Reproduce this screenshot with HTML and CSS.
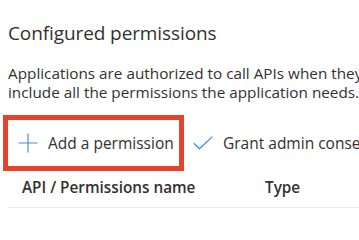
FILE: index.html
```html
<!DOCTYPE html>
<html>
<head>
<meta charset="utf-8">
<link rel="stylesheet" href="styles.css">
</head>
<body>
<div class="page">
  <h2 class="title">Configured permissions</h2>
  <p class="desc">Applications are authorized to call APIs when they are granted permissions by users/admins as part of the consent process. The list of configured permissions should<br>include all the permissions the application needs.</p>
  <div class="toolbar">
    <div class="highlight">
      <button class="cmd">
        <svg class="icon" width="20" height="20" viewBox="0 0 20 20"><path d="M10 0.5V19.5M0.5 10H19.5" stroke="#4a8fdc" stroke-width="1.2" fill="none"/></svg>
        <span>Add a permission</span>
      </button>
    </div>
    <button class="cmd">
      <svg class="icon check" width="20" height="14" viewBox="0 0 20 14"><path d="M0.8 7.2L6.4 12.8L19.4 0.6" stroke="#4a8fdc" stroke-width="1.3" fill="none"/></svg>
      <span>Grant admin consent for Contoso</span>
    </button>
  </div>
  <div class="thead">
    <div class="th name">API / Permissions name</div>
    <div class="th type">Type</div>
    <div class="th desc-col">Description</div>
  </div>
</div>
</body>
</html>
```

FILE: styles.css
```css
html, body {
  margin: 0;
  padding: 0;
  background: #ffffff;
  overflow: hidden;
}
.page {
  width: 359px;
  height: 215px;
  overflow: hidden;
  font-family: "Open Sans", "Noto Sans", sans-serif;
  color: #323130;
}
.title {
  margin: 0;
  padding: 20px 0 0 8px;
  font-size: 19px;
  font-weight: 400;
  line-height: 26px;
  letter-spacing: -0.1px;
  white-space: nowrap;
}
.desc {
  margin: 18px 0 0 8px;
  font-size: 15.3px;
  line-height: 19px;
  white-space: nowrap;
}
.toolbar {
  display: flex;
  align-items: center;
  margin-top: 13px;
  margin-left: 3px;
  white-space: nowrap;
}
.highlight {
  flex-shrink: 0;
  border: 5px solid #e5432b;
  width: 171px;
  height: 46px;
  display: flex;
  align-items: center;
}
.cmd {
  flex-shrink: 0;
  display: flex;
  align-items: center;
  background: none;
  border: 0;
  padding: 0;
  font-family: inherit;
  font-size: 15.5px;
  color: #323130;
}
.highlight .cmd {
  padding-left: 10px;
}
.highlight .icon {
  margin-right: 10px;
}
.toolbar > .cmd {
  margin-left: 9px;
}
.check {
  margin-right: 10px;
}
.thead {
  box-sizing: border-box;
  display: flex;
  margin: 0 0 0 8px;
  border-bottom: 1px solid #edebe9;
  height: 37px;
  padding-bottom: 4px;
  align-items: center;
  white-space: nowrap;
}
.th {
  flex-shrink: 0;
  font-size: 15.3px;
  font-weight: 600;
}
.name {
  padding-left: 14px;
  width: 243px;
}
.type {
  width: 120px;
}
```
